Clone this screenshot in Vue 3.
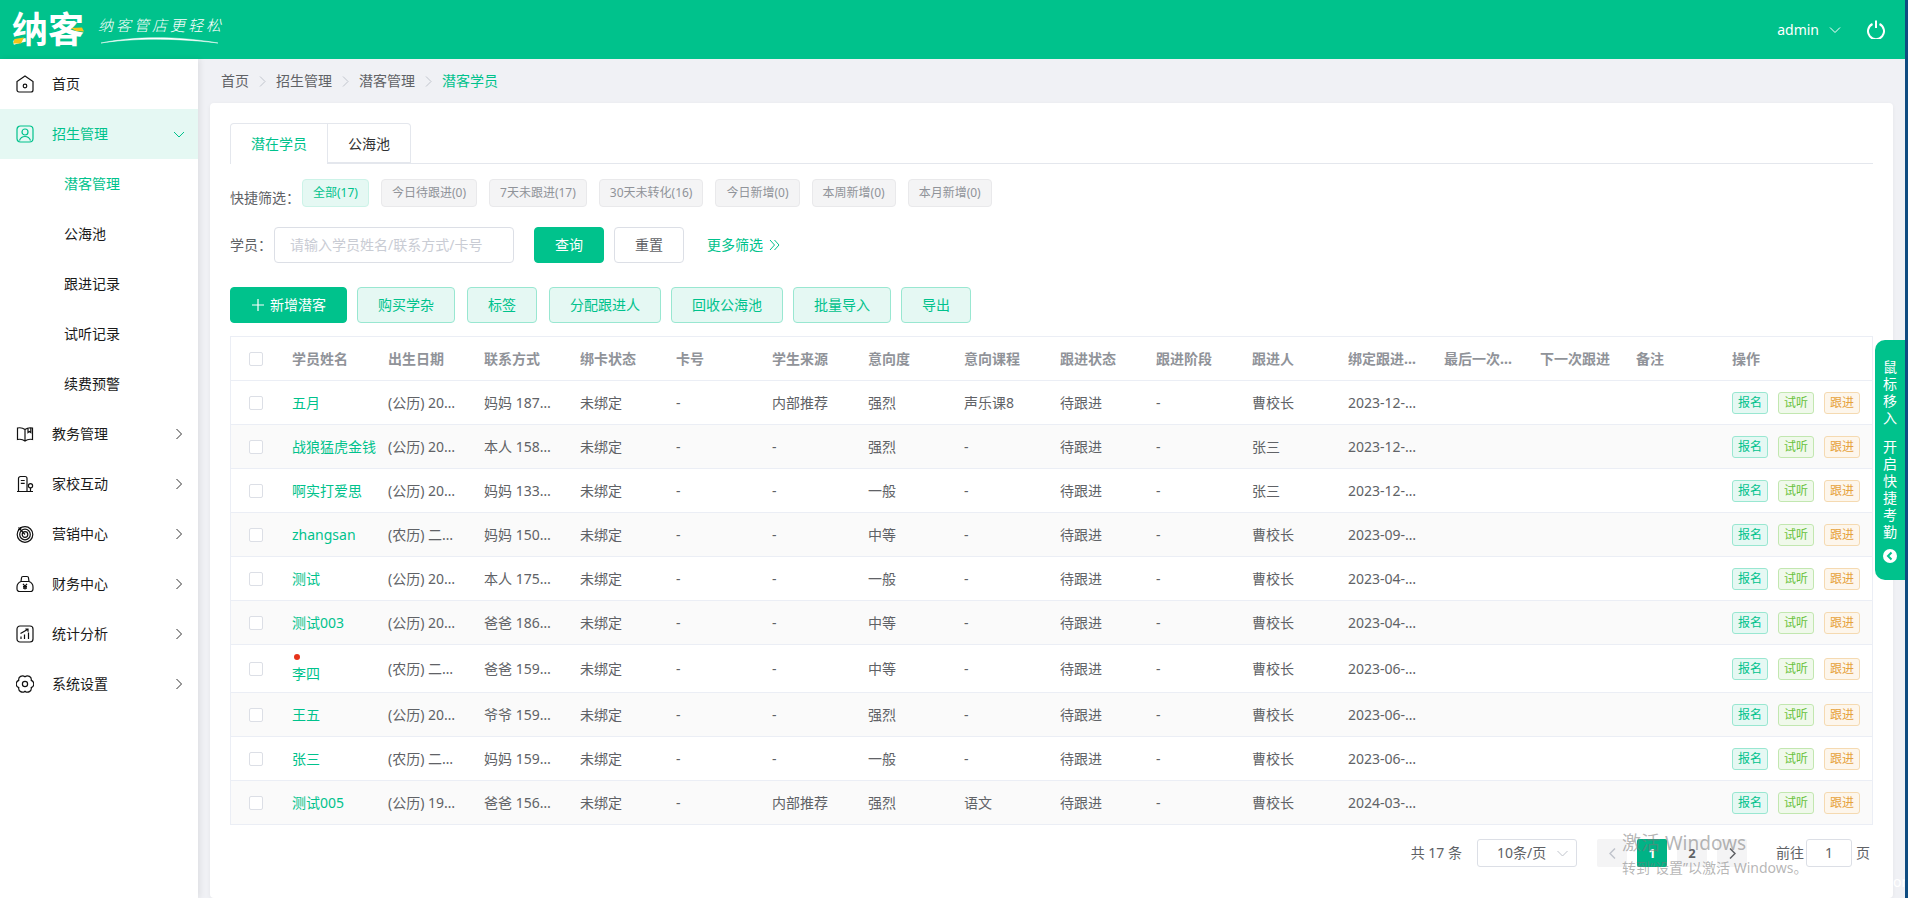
<script setup>
const menuTop = [
  { name: '教务管理', icon: '<path d="M9 4.500C7 3 4 2.500 1.500 3v11.500c2.500-.5 5.500 0 7.500 1.500 2-1.500 5-2 7.500-1.500V3C14 2.500 11 3 9 4.500zM9 4.500V16M12 3.200v4.300l1.400-1 1.400 1V2.900"/>' },
  { name: '家校互动', icon: '<path d="M2.500 16.500v-13a2 2 0 0 1 2-2h4.500a2 2 0 0 1 2 2v13M1 16.500h16M4.800 5.500h3.900M4.800 8.300h3.900M14.500 13v3.500"/><circle cx="14.500" cy="10.800" r="2.100"/>' },
  { name: '营销中心', icon: '<circle cx="9" cy="9.500" r="7.800"/><circle cx="9" cy="9.500" r="5.300"/><circle cx="9" cy="9.500" r="2.800"/><path d="M2.500 2.500L9 9.500M2 4.500h2.500V2"/>' },
  { name: '财务中心', icon: '<path d="M5 6.500h8c2.500 1 4 3 4 5.500v2a2.500 2.500 0 0 1-2.500 2.500h-11A2.500 2.500 0 0 1 1 14v-2c0-2.500 1.500-4.500 4-5.500zM5 6.500l.5-3.500A1.500 1.500 0 0 1 7 1.500h4A1.500 1.500 0 0 1 12.500 3l.5 3.500M7 8.800l2 2.400 2-2.400M9 11.200v3.300M7 11.600h4M7 13.200h4"/>' },
  { name: '统计分析', icon: '<rect x="1" y="1" width="16" height="16" rx="3"/><path d="M5 14v-2.500M8.500 14V9.500M12.500 14V7.500M4.500 8.500L11.500 4.500M9.300 4h2.700v2.700"/>' },
  { name: '系统设置', icon: '<path d="M9 1.800A3.800 3.800 0 0 1 15.240 5.400A3.800 3.800 0 0 1 15.240 12.600A3.800 3.800 0 0 1 9 16.200A3.800 3.800 0 0 1 2.760 12.600A3.800 3.800 0 0 1 2.760 5.400A3.800 3.800 0 0 1 9 1.800Z"/><circle cx="9" cy="9" r="2.600"/>' }
]
const subMenu = ['潜客管理', '公海池', '跟进记录', '试听记录', '续费预警']
const quickFilters = ['全部(17)', '今日待跟进(0)', '7天未跟进(17)', '30天未转化(16)', '今日新增(0)', '本周新增(0)', '本月新增(0)']
const toolButtons = ['购买学杂', '标签', '分配跟进人', '回收公海池', '批量导入', '导出']
const columns = ['学员姓名', '出生日期', '联系方式', '绑卡状态', '卡号', '学生来源', '意向度', '意向课程', '跟进状态', '跟进阶段', '跟进人', '绑定跟进时间', '最后一次跟进', '下一次跟进', '备注']

const rows = [
  { name: '五月', birth: '(公历) 2019-05-01', phone: '妈妈 18712340001', source: '内部推荐', level: '强烈', course: '声乐课8', owner: '曹校长', bind: '2023-12-18 10:21' },
  { name: '战狼猛虎金钱', birth: '(公历) 2018-03-12', phone: '本人 15812340002', source: '-', level: '强烈', course: '-', owner: '张三', bind: '2023-12-15 09:30' },
  { name: '啊实打爱思', birth: '(公历) 2017-08-20', phone: '妈妈 13312340003', source: '-', level: '一般', course: '-', owner: '张三', bind: '2023-12-12 16:02' },
  { name: 'zhangsan', birth: '(农历) 二零一六', phone: '妈妈 15012340004', source: '-', level: '中等', course: '-', owner: '曹校长', bind: '2023-09-08 11:45' },
  { name: '测试', birth: '(公历) 2015-01-09', phone: '本人 17512340005', source: '-', level: '一般', course: '-', owner: '曹校长', bind: '2023-04-21 14:10' },
  { name: '测试003', birth: '(公历) 2016-11-02', phone: '爸爸 18612340006', source: '-', level: '中等', course: '-', owner: '曹校长', bind: '2023-04-20 13:33' },
  { name: '李四', birth: '(农历) 二零一五', phone: '爸爸 15912340007', source: '-', level: '中等', course: '-', owner: '曹校长', bind: '2023-06-16 10:00', dot: true },
  { name: '王五', birth: '(公历) 2014-06-30', phone: '爷爷 15912340008', source: '-', level: '强烈', course: '-', owner: '曹校长', bind: '2023-06-16 09:12' },
  { name: '张三', birth: '(农历) 二零一四', phone: '妈妈 15912340009', source: '-', level: '一般', course: '-', owner: '曹校长', bind: '2023-06-15 17:40' },
  { name: '测试005', birth: '(公历) 1999-02-14', phone: '爸爸 15612340010', source: '内部推荐', level: '强烈', course: '语文', owner: '曹校长', bind: '2024-03-01 08:50' }
]
</script>

<template>
  <div class="page">
    <header class="topbar">
      <div class="logo">
        <span class="logo-name">纳客</span>
        <svg class="logo-accent" width="72" height="30" viewBox="0 0 72 30">
          <path d="M0 29.500L1.500 25L11 23.500L8 29.500Z" fill="#f5c518" />
          <path d="M58 14L69 13.500L71 17.500L63 17Z" fill="#f5c518" />
        </svg>
      </div>
      <div class="slogan">
        <span>纳客管店更轻松</span>
        <svg class="swoosh" width="118" height="8" viewBox="0 0 118 8">
          <path d="M0 7C30 1 70-1 117 7C70 1.500 30 2.500 0 7Z" fill="#fff" stroke="#fff" stroke-width=".5" />
        </svg>
      </div>
      <div class="topbar-right">
        <span class="user">admin</span>
        <svg class="user-arrow" width="12" height="8" viewBox="0 0 12 8" fill="none" stroke="#fff" stroke-width="1">
          <path d="M1 1.500L6 6.500L11 1.500" />
        </svg>
        <svg width="18" height="19" viewBox="0 0 18 19" fill="none" stroke="#fff" stroke-width="2">
          <path d="M5.500 4A8 8 0 1 0 12.500 4M9 .5V8" />
        </svg>
      </div>
    </header>

    <div class="body">
      <aside class="sidebar">
        <div class="menu-item">
          <svg class="menu-icon" width="18" height="18" viewBox="0 0 18 18" fill="none" stroke="#111" stroke-width="1.200">
            <path d="M9 1L17 6.500V15a2 2 0 0 1-2 2H3a2 2 0 0 1-2-2V6.500Z" />
            <circle cx="9" cy="11" r="1.800" />
          </svg>
          <span>首页</span>
        </div>
        <div class="menu-item menu-active">
          <svg class="menu-icon" width="18" height="18" viewBox="0 0 18 18" fill="none" stroke="#00c28c" stroke-width="1.200">
            <rect x="1" y="1" width="16" height="16" rx="3.500" />
            <circle cx="9" cy="7" r="3" />
            <path d="M3.500 15.500C4.500 12.500 6.500 11.500 9 11.500S13.500 12.500 14.500 15.500" />
          </svg>
          <span>招生管理</span>
          <svg class="menu-arrow" width="12" height="12" viewBox="0 0 12 12" fill="none" stroke="#00c28c" stroke-width="1">
            <path d="M1 4L6 9L11 4" />
          </svg>
        </div>
        <div v-for="(sub, i) in subMenu" :key="sub" class="sub-item" :class="{ 'sub-active': i === 0 }">{{ sub }}</div>
        <div v-for="m in menuTop" :key="m.name" class="menu-item">
          <svg class="menu-icon" width="18" height="18" viewBox="0 0 18 18" fill="none" stroke="#111" stroke-width="1.200" v-html="m.icon"></svg>
          <span>{{ m.name }}</span>
          <svg class="menu-arrow" width="12" height="12" viewBox="0 0 12 12" fill="none" stroke="#333" stroke-width="1">
            <path d="M3.500 1L8.500 6L3.500 11" />
          </svg>
        </div>
      </aside>

      <main class="main">
        <div class="breadcrumb">
          <span>首页</span>
          <svg class="crumb-sep" width="7" height="11" viewBox="0 0 7 11" fill="none" stroke="#c0c4cc"><path d="M1 .5L6 5.500L1 10.500" /></svg>
          <span>招生管理</span>
          <svg class="crumb-sep" width="7" height="11" viewBox="0 0 7 11" fill="none" stroke="#c0c4cc"><path d="M1 .5L6 5.500L1 10.500" /></svg>
          <span>潜客管理</span>
          <svg class="crumb-sep" width="7" height="11" viewBox="0 0 7 11" fill="none" stroke="#c0c4cc"><path d="M1 .5L6 5.500L1 10.500" /></svg>
          <span class="crumb-last">潜客学员</span>
        </div>

        <section class="card">
          <div class="tabs">
            <div class="tab tab-active">潜在学员</div>
            <div class="tab">公海池</div>
          </div>

          <div class="quick">
            <span class="quick-label">快捷筛选：</span>
            <span v-for="(q, i) in quickFilters" :key="q" class="chip" :class="{ 'chip-active': i === 0 }">{{ q }}</span>
          </div>

          <div class="search">
            <span class="search-label">学员：</span>
            <div class="input">请输入学员姓名/联系方式/卡号</div>
            <button class="btn btn-primary search-btn">查询</button>
            <button class="btn btn-plain">重置</button>
            <span class="more">更多筛选</span>
            <svg class="more-icon" width="11" height="12" viewBox="0 0 11 12" fill="none" stroke="#00c28c" stroke-width="1">
              <path d="M1 1L5.500 6L1 11M5.500 1L10 6L5.500 11" />
            </svg>
          </div>

          <div class="tools">
            <button class="btn btn-primary btn-add">
              <svg width="14" height="14" viewBox="0 0 14 14" stroke="#fff" stroke-width="1.200"><path d="M7 1V13M1 7H13" /></svg>
              新增潜客
            </button>
            <button v-for="t in toolButtons" :key="t" class="btn btn-light" :class="{ 'btn-wide-gap': t === '标签' || t === '分配跟进人' }">{{ t }}</button>
          </div>

          <div class="table-wrap">
            <table class="table">
              <colgroup>
                <col style="width: 51px" />
                <col v-for="c in columns" :key="c" style="width: 96px" />
                <col />
              </colgroup>
              <thead>
                <tr>
                  <th class="check-cell"><span class="checkbox"></span></th>
                  <th v-for="c in columns" :key="c"><div class="cell">{{ c }}</div></th>
                  <th><div class="cell">操作</div></th>
                </tr>
              </thead>
              <tbody>
                <tr v-for="(r, i) in rows" :key="r.name" :class="{ stripe: i % 2 === 1, 'row-dot': r.dot }">
                  <td class="check-cell"><span class="checkbox"></span></td>
                  <td class="name-cell">
                    <div v-if="r.dot" class="dot"></div>
                    <div class="name">{{ r.name }}</div>
                  </td>
                  <td><div class="cell">{{ r.birth }}</div></td>
                  <td><div class="cell">{{ r.phone }}</div></td>
                  <td><div class="cell">未绑定</div></td>
                  <td><div class="cell">-</div></td>
                  <td><div class="cell">{{ r.source }}</div></td>
                  <td><div class="cell">{{ r.level }}</div></td>
                  <td><div class="cell">{{ r.course }}</div></td>
                  <td><div class="cell">待跟进</div></td>
                  <td><div class="cell">-</div></td>
                  <td><div class="cell">{{ r.owner }}</div></td>
                  <td><div class="cell">{{ r.bind }}</div></td>
                  <td></td>
                  <td></td>
                  <td></td>
                  <td>
                    <div class="ops">
                      <span class="op op-sign">报名</span>
                      <span class="op op-trial">试听</span>
                      <span class="op op-follow">跟进</span>
                    </div>
                  </td>
                </tr>
              </tbody>
            </table>
          </div>

          <div class="pager">
            <span class="pager-total">共 17 条</span>
            <div class="pager-size">
              <span>10条/页</span>
              <svg width="11" height="7" viewBox="0 0 11 7" fill="none" stroke="#c0c4cc"><path d="M.5 1L5.500 6L10.500 1" /></svg>
            </div>
            <span class="page-btn page-prev">
              <svg width="7" height="11" viewBox="0 0 7 11" fill="none" stroke="#c0c4cc" stroke-width="1.500"><path d="M6 .5L1 5.500L6 10.500" /></svg>
            </span>
            <span class="page-btn page-on">1</span>
            <span class="page-btn">2</span>
            <span class="page-btn">
              <svg width="7" height="11" viewBox="0 0 7 11" fill="none" stroke="#606266" stroke-width="1.500"><path d="M1 .5L6 5.500L1 10.500" /></svg>
            </span>
            <span class="pager-go">前往</span>
            <span class="pager-input">1</span>
            <span class="pager-unit">页</span>
          </div>
        </section>
      </main>
    </div>

    <div class="attend">
      <div class="attend-text">鼠标移入</div>
      <div class="attend-text attend-second">开启快捷考勤</div>
      <svg class="attend-icon" width="14" height="14" viewBox="0 0 14 14">
        <circle cx="7" cy="7" r="7" fill="#fff" />
        <path d="M8.500 3.500L5 7L8.500 10.500" fill="none" stroke="#00c28c" stroke-width="2" />
      </svg>
    </div>

    <div class="watermark">
      <div class="wm-title">激活 Windows</div>
      <div class="wm-sub">转到“设置”以激活 Windows。</div>
    </div>
    <span class="stray">om</span>
    <div class="desktop-edge"></div>
  </div>
</template>

<style>
body {
  margin: 0;
  overflow: hidden;
}
</style>

<style scoped>
.page {
  position: relative;
  width: 1908px;
  height: 898px;
  padding-right: 3px;
  box-sizing: border-box;
  overflow: hidden;
  display: flex;
  flex-direction: column;
  background: #f0f1f5;
  font-family: "Noto Sans", "Noto Sans CJK SC", sans-serif;
  font-size: 14px;
  line-height: 20px;
  color: #606266;
}

.desktop-edge {
  position: absolute;
  top: 0;
  right: 0;
  width: 3px;
  height: 100%;
  background: #0f4c81;
}

.topbar {
  flex: none;
  height: 59px;
  display: flex;
  align-items: center;
  background: #00c28c;
  color: #fff;
}

.logo {
  position: relative;
  margin-left: 12px;
  width: 74px;
  height: 59px;
  display: flex;
  align-items: center;
}

.logo-name {
  font-size: 36px;
  font-weight: 700;
  line-height: 59px;
  white-space: nowrap;
}

.logo-accent {
  position: absolute;
  left: 1px;
  top: 14px;
}

.slogan {
  position: relative;
  margin-left: 12px;
  width: 126px;
  height: 59px;
}

.slogan span {
  position: absolute;
  left: 0;
  top: 15px;
  font-size: 15px;
  line-height: 20px;
  letter-spacing: 3px;
  font-weight: 300;
  font-style: italic;
  white-space: nowrap;
}

.swoosh {
  position: absolute;
  left: 3px;
  top: 36px;
}

.topbar-right {
  margin-left: auto;
  padding-right: 20px;
  display: flex;
  align-items: center;
}

.user {
  font-size: 14px;
  margin-right: 10px;
}

.user-arrow {
  margin-right: 26px;
}

.body {
  flex: 1;
  min-height: 0;
  display: flex;
}

.sidebar {
  flex: none;
  width: 198px;
  background: #fff;
  box-shadow: 2px 0 6px rgba(0, 0, 0, 0.08);
  color: #1a1a1a;
}

.menu-item {
  height: 50px;
  padding: 0 13px 0 16px;
  display: flex;
  align-items: center;
}

.menu-icon {
  flex: none;
  margin-right: 18px;
}

.menu-arrow {
  margin-left: auto;
}

.menu-active {
  background: #e5f8f3;
  color: #00c28c;
}

.sub-item {
  height: 50px;
  line-height: 50px;
  padding-left: 64px;
}

.sub-active {
  color: #00c28c;
}

.main {
  flex: 1;
  min-width: 0;
  padding: 0 12px;
  display: flex;
  flex-direction: column;
}

.breadcrumb {
  flex: none;
  height: 44px;
  padding-left: 11px;
  display: flex;
  align-items: center;
  line-height: 46px;
}

.crumb-sep {
  margin: 1px 10px 0;
}

.crumb-last {
  color: #00c28c;
}

.card {
  flex: 1;
  background: #fff;
  border-radius: 4px;
  padding: 20px;
  box-shadow: 0 1px 4px rgba(0, 0, 0, 0.05);
}

.tabs {
  height: 40px;
  display: flex;
  border-bottom: 1px solid #e4e7ed;
}

.tab {
  height: 40px;
  padding: 0 20px;
  box-sizing: border-box;
  line-height: 40px;
  background: #fff;
  border: 1px solid #e4e7ed;
  border-left: 0;
  border-radius: 0 4px 0 0;
  color: #303133;
  white-space: nowrap;
}

.tab-active {
  height: 41px;
  border-left: 1px solid #e4e7ed;
  border-bottom: 0;
  border-radius: 4px 0 0 0;
  color: #00c28c;
}

.quick {
  height: 28px;
  margin-top: 15px;
  display: flex;
  align-items: flex-end;
  gap: 12px;
}

.quick-label {
  width: 60px;
  line-height: 20px;
  margin-bottom: -1px;
  white-space: nowrap;
}

.chip {
  height: 28px;
  padding: 0 10px;
  box-sizing: border-box;
  line-height: 26px;
  font-size: 12px;
  color: #909399;
  background: #f4f4f5;
  border: 1px solid #e9e9eb;
  border-radius: 4px;
  white-space: nowrap;
}

.chip-active {
  color: #00c28c;
  background: #e5f8f3;
  border-color: #ccf3e8;
}

.search {
  height: 36px;
  margin-top: 20px;
  display: flex;
  align-items: center;
}

.search-label {
  width: 44px;
  white-space: nowrap;
}

.input {
  width: 240px;
  height: 36px;
  padding-left: 15px;
  box-sizing: border-box;
  line-height: 34px;
  color: #c9ccd4;
  border: 1px solid #dcdfe6;
  border-radius: 4px;
  white-space: nowrap;
  overflow: hidden;
}

.btn {
  height: 36px;
  padding: 0 20px;
  box-sizing: border-box;
  font: inherit;
  border-radius: 4px;
  border: 1px solid #dcdfe6;
  white-space: nowrap;
}

.btn-primary {
  color: #fff;
  background: #00c28c;
  border-color: #00c28c;
}

.btn-plain {
  color: #606266;
  background: #fff;
  margin-left: 10px;
}

.search-btn {
  margin-left: 20px;
}

.more {
  margin-left: 23px;
  color: #00c28c;
}

.more-icon {
  margin-left: 6px;
}

.tools {
  height: 36px;
  margin-top: 24px;
  display: flex;
  gap: 10px;
}

.btn-add {
  display: flex;
  align-items: center;
  gap: 5px;
}

.btn-light {
  color: #00c28c;
  background: #e5f8f3;
  border-color: #99e7d1;
}

.btn-wide-gap {
  margin-left: 2px;
}

.table-wrap {
  margin-top: 13px;
  border: 1px solid #ebeef5;
  border-bottom: 0;
}

.table {
  width: 100%;
  table-layout: fixed;
  border-collapse: separate;
  border-spacing: 0;
}

th,
td {
  height: 44px;
  padding: 0;
  box-sizing: border-box;
  border-bottom: 1px solid #ebeef5;
  text-align: left;
  font-weight: 400;
}

th {
  color: #909399;
  font-weight: 700;
}

.stripe td {
  background: #fafafa;
}

.row-dot td {
  height: 48px;
}

.check-cell {
  padding-left: 18px;
}

.checkbox {
  display: block;
  width: 14px;
  height: 14px;
  margin-top: 1px;
  box-sizing: border-box;
  background: #fff;
  border: 1px solid #dcdfe6;
  border-radius: 2px;
}

.cell {
  width: 70px;
  margin-left: 10px;
  overflow: hidden;
  white-space: nowrap;
  text-overflow: ellipsis;
}

.name-cell {
  padding-left: 10px;
}

.name {
  color: #00c28c;
  white-space: nowrap;
}

.dot {
  width: 6px;
  height: 6px;
  margin: 0 0 4px 2px;
  border-radius: 50%;
  background: #e6331a;
}

.ops {
  margin-left: 10px;
  display: flex;
  gap: 10px;
}

.op {
  width: 36px;
  height: 22px;
  box-sizing: border-box;
  line-height: 20px;
  text-align: center;
  font-size: 12px;
  border-radius: 3px;
  border: 1px solid;
}

.op-sign {
  color: #00c28c;
  background: #e5f8f3;
  border-color: #99e7d1;
}

.op-trial {
  color: #67c23a;
  background: #f0f9eb;
  border-color: #c2e7b0;
}

.op-follow {
  color: #e6a23c;
  background: #fdf6ec;
  border-color: #f5dab1;
}

.pager {
  height: 28px;
  margin-top: 14px;
  padding-right: 3px;
  display: flex;
  align-items: center;
  justify-content: flex-end;
}

.pager-total {
  margin-right: 15px;
}

.pager-size {
  width: 100px;
  height: 28px;
  padding: 0 8px 0 19px;
  box-sizing: border-box;
  display: flex;
  align-items: center;
  justify-content: space-between;
  border: 1px solid #dcdfe6;
  border-radius: 3px;
  margin-right: 15px;
}

.page-btn {
  width: 30px;
  height: 28px;
  margin: 0 5px;
  line-height: 28px;
  font-weight: 700;
  font-size: 13px;
  text-align: center;
  border-radius: 2px;
  background: #f4f4f5;
  display: flex;
  align-items: center;
  justify-content: center;
}

.page-on {
  color: #fff;
  background: #00b386;
}

.pager-go {
  margin-left: 24px;
}

.pager-input {
  width: 46px;
  height: 28px;
  margin: 0 4px 0 2px;
  box-sizing: border-box;
  line-height: 26px;
  text-align: center;
  border: 1px solid #dcdfe6;
  border-radius: 3px;
}

.attend {
  position: absolute;
  top: 340px;
  right: 3px;
  width: 30px;
  height: 240px;
  padding-top: 18px;
  box-sizing: border-box;
  display: flex;
  flex-direction: column;
  align-items: center;
  background: #00c28c;
  border-radius: 10px 0 0 10px;
  color: #fff;
}

.attend-text {
  width: 14px;
  line-height: 17px;
  word-break: break-all;
}

.attend-second {
  margin-top: 12px;
}

.attend-icon {
  margin-top: 9px;
}

.watermark {
  position: absolute;
  left: 1622px;
  top: 830px;
  color: rgba(120, 120, 120, 0.55);
  pointer-events: none;
}

.wm-title {
  font-size: 19px;
  line-height: 26px;
}

.wm-sub {
  margin-top: 2px;
  font-size: 14px;
  line-height: 20px;
}

.stray {
  position: absolute;
  right: 3px;
  top: 873px;
  width: 12px;
  overflow: hidden;
  color: #fff;
  line-height: 18px;
}
</style>
